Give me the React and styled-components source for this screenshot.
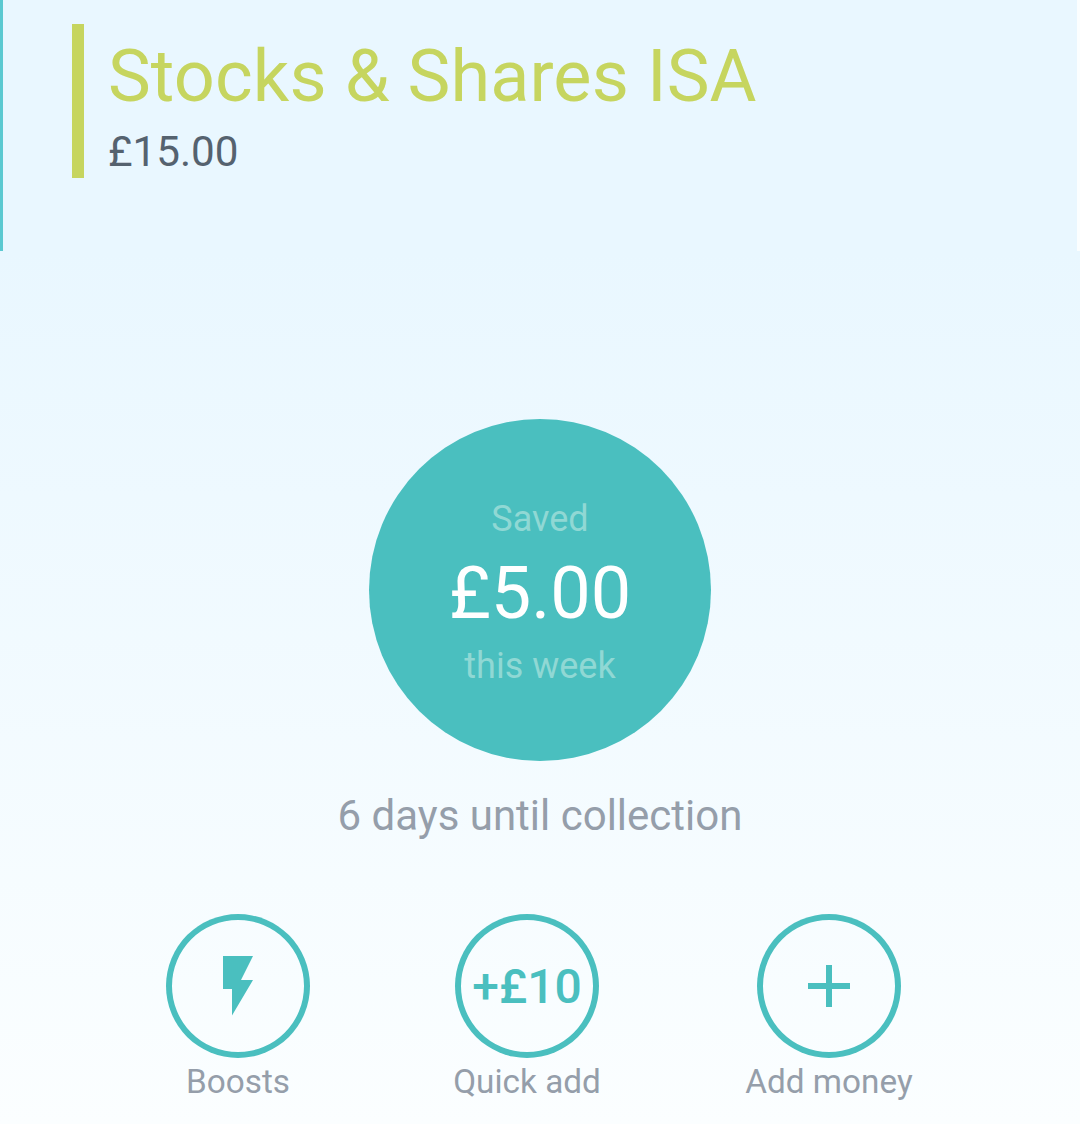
import styled, { createGlobalStyle } from 'styled-components';

const GlobalStyle = createGlobalStyle`
  html, body {
    margin: 0;
    padding: 0;
    background: #fff;
  }
  * {
    box-sizing: border-box;
  }
`;

const Page = styled.div`
  width: 1080px;
  height: 1124px;
  overflow: hidden;
  font-family: Roboto, sans-serif;
  background: linear-gradient(180deg, #e9f7ff 0%, #e9f7ff 22.3%, #fbfeff 100%);
`;

const Header = styled.header`
  height: 251px;
  padding: 24px 0 0 69px;
  background: #e9f7ff;
  border-left: 3px solid #5bc9d1;
  border-right: 3px solid #fbfeff;
`;

const Account = styled.div`
  display: flex;
  flex-direction: column;
  height: 154px;
  padding-left: 24px;
  border-left: 12px solid #c6d55f;
`;

const Title = styled.h1`
  margin: 0;
  padding-top: 5px;
  font-size: 72px;
  letter-spacing: 0.12px;
  line-height: 96px;
  font-weight: 400;
  color: #c6d55f;
`;

const Balance = styled.div`
  margin-top: 1px;
  font-size: 42.2px;
  line-height: 52px;
  color: #55626f;
`;

const Main = styled.main`
  display: flex;
  flex-direction: column;
  align-items: center;
  padding-top: 168px;
`;

const SavedCircle = styled.div`
  display: flex;
  flex-direction: column;
  align-items: center;
  justify-content: center;
  width: 342px;
  height: 342px;
  padding-top: 5px;
  border-radius: 50%;
  background: #4abfbf;
`;

const SavedCaption = styled.div`
  font-size: 36px;
  line-height: 44px;
  color: #90d8d4;
`;

const SavedAmount = styled.div`
  padding-top: 2px;
  font-size: 72px;
  line-height: 101px;
  color: #fff;
`;

const Countdown = styled.div`
  margin-top: 29px;
  font-size: 42px;
  line-height: 52px;
  color: #959eaa;
`;

const Actions = styled.div`
  display: grid;
  grid-template-columns: 144px 144px 170px;
  column-gap: 145px;
  justify-items: center;
  align-self: stretch;
  margin-top: 72px;
  padding-left: 166px;
`;

const Action = styled.div`
  display: flex;
  flex-direction: column;
  align-items: center;
  gap: 4px;
`;

const ActionCircle = styled.div`
  display: flex;
  align-items: center;
  justify-content: center;
  width: 144px;
  height: 144px;
  border-radius: 50%;
  box-shadow: inset 0 0 0 6px #4abfbf;
  color: #4abfbf;
`;

const QuickAmount = styled.span`
  font-size: 48px;
  font-weight: 500;
  white-space: nowrap;
`;

const ActionLabel = styled.div`
  font-size: 33.3px;
  line-height: 40px;
  color: #959eaa;
  white-space: nowrap;
`;

function BoltIcon() {
  return (
    <svg width="30" height="60" viewBox="0 0 30 60" fill="currentColor">
      <path d="M0 0H30L18 24H30L9 59.5V33H0Z" />
    </svg>
  );
}

function PlusIcon() {
  return (
    <svg width="42" height="42" viewBox="0 0 42 42" fill="currentColor">
      <path d="M18 0H24V18H42V24H24V42H18V24H0V18H18Z" />
    </svg>
  );
}

export default function App() {
  return (
    <Page>
      <GlobalStyle />
      <Header>
        <Account>
          <Title>Stocks &amp; Shares ISA</Title>
          <Balance>£15.00</Balance>
        </Account>
      </Header>
      <Main>
        <SavedCircle>
          <SavedCaption>Saved</SavedCaption>
          <SavedAmount>£5.00</SavedAmount>
          <SavedCaption>this week</SavedCaption>
        </SavedCircle>
        <Countdown>6 days until collection</Countdown>
        <Actions>
          <Action>
            <ActionCircle>
              <BoltIcon />
            </ActionCircle>
            <ActionLabel>Boosts</ActionLabel>
          </Action>
          <Action>
            <ActionCircle>
              <QuickAmount>+£10</QuickAmount>
            </ActionCircle>
            <ActionLabel>Quick add</ActionLabel>
          </Action>
          <Action>
            <ActionCircle>
              <PlusIcon />
            </ActionCircle>
            <ActionLabel>Add money</ActionLabel>
          </Action>
        </Actions>
      </Main>
    </Page>
  );
}
